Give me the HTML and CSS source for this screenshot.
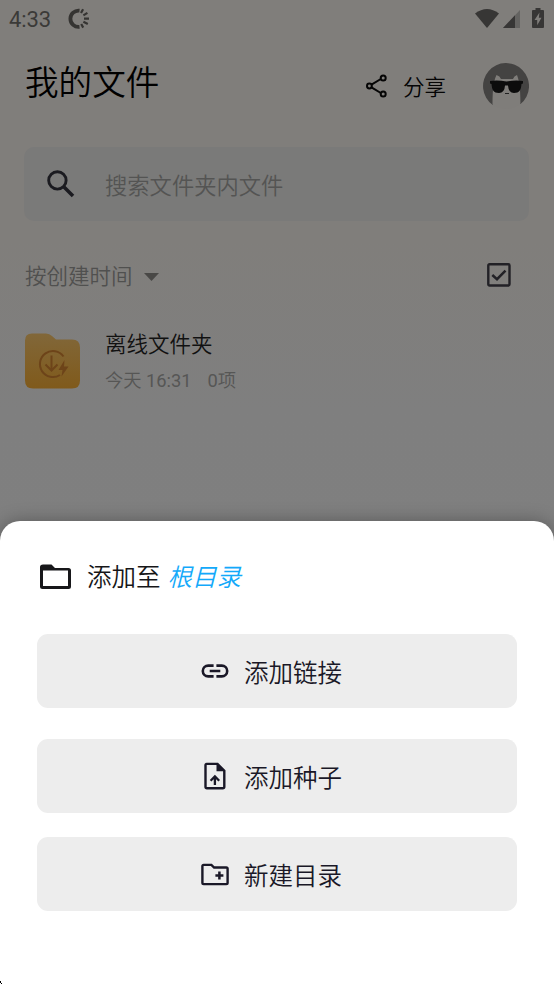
FILE: index.html
```html
<!DOCTYPE html>
<html lang="zh-CN">
<head>
<meta charset="utf-8">
<meta name="viewport" content="width=device-width">
<title>我的文件</title>
<link rel="stylesheet" href="styles.css">
</head>
<body>
<main class="screen">
  <div class="status">
    <span class="clock">4:33</span>
    <svg class="sync" width="22" height="22" viewBox="0 0 22 22" fill="none" stroke="#353432">
      <path d="M11.5 2.6A8.2 8.2 0 1 0 11.5 18.9" stroke-width="3.8"/>
      <path d="M13 5l2.1-3.8M15.4 7.4l4-2.5M16 10.7h5M15.4 13.8l4.4 2.2M13.2 16l2 3.6" stroke-width="2.2"/>
    </svg>
    <svg class="wifi" width="24" height="20" viewBox="0 0 24 20"><path d="M0 4.5Q12-4.5 24 4.5L12 19z" fill="#373635"/></svg>
    <svg class="signal" width="17" height="18" viewBox="0 0 17 18"><path d="M0 18L17 0V18z" fill="#646361"/><path d="M0 18L12 5.3V18z" fill="#373635"/></svg>
    <svg class="battery" width="12" height="20" viewBox="0 0 12 20"><path d="M3.5 0h5v2H11a1 1 0 0 1 1 1v16a1 1 0 0 1-1 1H1a1 1 0 0 1-1-1V3a1 1 0 0 1 1-1h2.500z" fill="#373635"/><path d="M7.500 4.500L2.500 12H5.200V17.200L9.500 9.800H6.800z" fill="#807e7b"/></svg>
  </div>

  <header class="header">
    <h1>我的文件</h1>
    <div class="share">
      <svg width="22" height="24" viewBox="0 0 22 24" fill="none" stroke="#050505" stroke-width="2"><path d="M5.500 10.700L14.800 5M5.500 13.300L14.800 19"/><circle cx="3.400" cy="12" r="2.400"/><circle cx="17.200" cy="3.900" r="2.500"/><circle cx="17.200" cy="20.100" r="2.500"/></svg>
      <span>分享</span>
    </div>
    <svg class="avatar" width="46" height="46" viewBox="0 0 46 46">
      <defs><clipPath id="head"><circle cx="23" cy="23" r="23"/></clipPath></defs>
      <path d="M9.500 41.700A23 23 0 1 1 37.500 41z" fill="#444342"/>
      <path d="M9.500 46C9.500 29 10 19 13.500 12Q17 13 18 16H30Q31 13 34 12C37 20 37.500 29 37.500 46z" fill="#7f7d7a" clip-path="url(#head)"/>
      <path d="M7 18Q15 17 23.500 18.500Q32 17 40 18V20.500L38.500 21C38 27 36.500 30 31 30Q25.500 30 25 22.500H22Q21.500 30 16 30C10.500 30 9 27 8.500 21L7 20.500z" fill="#0c0c0c"/>
      <path d="M22 30.500h4" stroke="#222" stroke-width="1"/>
    </svg>
  </header>

  <div class="search">
    <svg width="28" height="28" viewBox="0 0 28 28" fill="none" stroke="#1b1b20"><circle cx="10.400" cy="10.400" r="8.700" stroke-width="2.900"/><path d="M16.500 16.500L26 26" stroke-width="3.500"/></svg>
    <span>搜索文件夹内文件</span>
  </div>

  <div class="sort">
    <span>按创建时间</span>
    <svg class="caret" width="15" height="8" viewBox="0 0 15 8"><path d="M0 0H15L7.500 8z" fill="#494846"/></svg>
    <svg class="check" width="24" height="24" viewBox="0 0 24 24" fill="none" stroke="#222126"><rect x="1.300" y="1.300" width="21.200" height="21.200" rx="1.200" stroke-width="2.400"/><path d="M5.300 12L10 16.200L18.500 7.600" stroke-width="2.500"/></svg>
  </div>

  <div class="item">
    <svg width="55" height="56" viewBox="0 0 55 56">
      <defs><linearGradient id="gold" x1="0" y1="0" x2="0" y2="1"><stop offset="0" stop-color="#816739"/><stop offset="1" stop-color="#805a1b"/></linearGradient></defs>
      <path d="M7 .5H21Q24.500 .5 27 3L31 6.500H47Q55 6.500 55 14.500V47.500Q55 55.500 47 55.500H8Q0 55.500 0 47.500V7.500Q0 .5 7 .5z" fill="url(#gold)"/>
      <g fill="none" stroke="#6d4419" stroke-width="2"><path d="M35 42A13 13 0 1 1 38.500 23.500"/><path d="M26.500 22.500V37M20.500 31.500L26.500 37.500L32.500 31.500"/></g>
      <path d="M39.500 27L33.500 37H37.500L36.500 43.500L43.500 33.500H39z" fill="#6d4419"/>
    </svg>
    <div class="info">
      <div class="name">离线文件夹</div>
      <div class="meta"><span>今天 <b>16:31</b></span><span><b>0</b>项</span></div>
    </div>
  </div>

  <section class="sheet">
    <h2>
      <svg width="32" height="26" viewBox="0 0 32 26"><path d="M3 .5H11.500L15 4H28.500Q31 4 31 6.500V22.500Q31 25 28.500 25H2.500Q0 25 0 22.500V3Q0 .5 3 .5zM3 6.500V22H28V6.500z" fill="#17171a" fill-rule="evenodd"/></svg>
      <span>添加至</span><em>根目录</em>
    </h2>
    <button class="action link" type="button">
      <svg width="28" height="28" viewBox="0 0 28 28" fill="none" stroke="#1a1827" stroke-width="2.600"><path d="M12.600 8.600H7.200A5.400 5.400 0 0 0 7.200 19.400H12.600M15.400 8.600H20.800A5.400 5.400 0 0 1 20.800 19.400H15.400M8.700 14H19.300"/></svg>
      <span>添加链接</span>
    </button>
    <button class="action seed" type="button">
      <svg width="28" height="28" viewBox="0 0 28 28" fill="none" stroke="#1a1827" stroke-width="2.400"><path d="M5.800 1.900H16.500L23.300 8.700V24.700Q23.300 26.200 21.800 26.200H6Q4.500 26.200 4.500 24.700V3.200Q4.500 1.900 5.800 1.900z"/><path d="M15.500 1.500V9.300H23.500z" fill="#1a1827" stroke="none"/><path d="M13.900 23V15.300M9.600 18.800L13.900 14.500L18.200 18.800" stroke-width="2.300"/></svg>
      <span>添加种子</span>
    </button>
    <button class="action folder" type="button">
      <svg width="28" height="28" viewBox="0 0 28 28" fill="none" stroke="#1a1827" stroke-width="2.400"><path d="M2.700 4.900H10.400L13.100 7.500H25.300Q26.600 7.500 26.600 8.800V22.800Q26.600 24.100 25.300 24.100H2.700Q1.400 24.100 1.400 22.800V6.200Q1.400 4.900 2.700 4.900z"/><path d="M18.400 11.600V19.600M14.400 15.600H22.400" stroke-width="2.500"/></svg>
      <span>新建目录</span>
    </button>
    <svg class="corner" width="2" height="3" viewBox="0 0 2 3"><path d="M0 0h1v2h1v1H1V2H0z"/></svg>
  </section>
</main>
</body>
</html>
```
FILE: styles.css
```css
* { box-sizing: border-box; }
body {
  margin: 0;
  font-family: Roboto, "Noto Sans CJK SC", sans-serif;
  font-weight: 350;
}
svg { display: block; flex-shrink: 0; }
h1, h2 { margin: 0; font-weight: inherit; }
b { font-weight: 400; }
.screen {
  display: flex;
  flex-direction: column;
  width: 554px;
  height: 984px;
  overflow: hidden;
  background: linear-gradient(#807e7b 0, #807e7b 240px, #7f7f7f 410px, #808080 100%);
}
.status {
  display: flex;
  align-items: center;
  height: 38px;
  padding: 0 10px 0 9px;
}
.clock {
  width: 42px;
  font-size: 22px;
  font-weight: 400;
  letter-spacing: -.1px;
  color: #3b3a38;
  white-space: nowrap;
}
.sync { margin: 0 0 0 17px; }
.wifi { margin-left: auto; }
.signal { margin-left: 4px; }
.battery { margin: -2px 0 0 12px; }
.header {
  display: flex;
  align-items: center;
  height: 98px;
  padding: 0 25px;
}
h1 {
  margin-top: -7px;
  font-size: 33.6px;
  line-height: 50px;
  color: #000;
}
.share {
  display: flex;
  align-items: center;
  gap: 15px;
  margin: 0 37px 0 auto;
  font-size: 21.5px;
  line-height: 32px;
  color: #050505;
}
.share svg { margin-top: -2px; }
.share span { margin-top: 2px; }
.avatar { margin-top: -2px; }
.search {
  display: flex;
  align-items: center;
  gap: 30px;
  height: 74px;
  margin: 11px 25px 0 24px;
  padding-left: 23px;
  border-radius: 10px;
  background: #7a7a79;
  font-size: 22.3px;
  color: #545453;
}
.search span { margin-top: -1px; }
.sort {
  display: flex;
  align-items: center;
  height: 36px;
  margin: 36px 43px 0 25px;
  font-size: 21.5px;
  color: #50504f;
}
.sort span { margin-top: -2px; }
.caret { margin: 3px 0 0 11px; }
.check { margin: 0 0 0 auto; }
.item {
  display: flex;
  gap: 25px;
  margin: 40px 0 0 25px;
}
.name {
  font-size: 21.5px;
  line-height: 24px;
  color: #111;
}
.meta {
  display: flex;
  gap: 16px;
  margin-top: 12px;
  font-size: 18.300px;
  line-height: 24px;
  color: #565655;
}
.sheet {
  position: relative;
  flex: 1;
  margin-top: 128px;
  padding: 35px 37px 0;
  border-radius: 20px 20px 0 0;
  background: #fff;
  box-shadow: 0 0 18px rgb(0 0 0 / 30%);
}
h2 {
  display: flex;
  align-items: center;
  height: 42px;
  padding-left: 3px;
  font-size: 24.500px;
  color: #161618;
}
h2 span, h2 em { margin-top: -3px; }
h2 span { margin-left: 15px; }
em { margin-left: 7px; color: #13a9fa; }
.action {
  display: flex;
  align-items: center;
  justify-content: center;
  gap: 15px;
  width: 480px;
  height: 74px;
  padding: 0 11px 0 0;
  border: 0;
  border-radius: 11px;
  background: #ededed;
  font: inherit;
  font-size: 24.500px;
  color: #1a1827;
}
.action svg { margin-top: -1px; }
.link { margin-top: 36px; }
.seed { margin-top: 31px; }
.folder { margin-top: 24px; }
.corner { position: absolute; left: 0; bottom: 0; }
```
